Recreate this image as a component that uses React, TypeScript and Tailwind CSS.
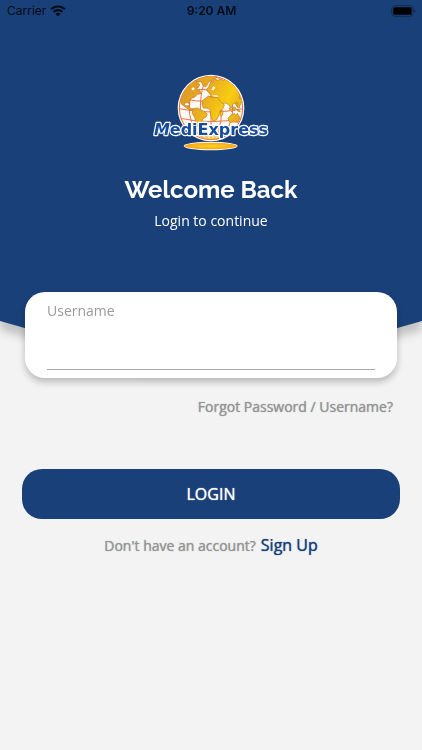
import React, { useState } from 'react';

const BODY_FONT = "font-['Open_Sans','Noto_Sans',sans-serif]";
const THICK = '[text-shadow:0_0_1px_currentColor]';

function StatusBar() {
  return (
    <div className="grid grid-cols-3 items-center h-[22px] pl-[7px] pr-[6px] font-[Inter,'Liberation_Sans',sans-serif] text-xs text-[#050b16]">
      <div className="flex items-center gap-1">
        <span>Carrier</span>
        <svg viewBox="0 0 46 34" className="w-4 h-3" fill="currentColor" aria-hidden="true">
          <path d="M23 1C14.500 1 6.700 4.300 1 9.700l4.300 4.500C9.900 9.900 16.100 7.200 23 7.200s13.100 2.700 17.700 7l4.300-4.500C39.300 4.300 31.500 1 23 1z" />
          <path d="M23 11.500c-5.600 0-10.700 2.200-14.500 5.800l4.400 4.500c2.700-2.500 6.200-4.100 10.100-4.100s7.400 1.600 10.100 4.100l4.400-4.500c-3.800-3.600-8.900-5.800-14.500-5.800z" />
          <path d="M23 22c-2.800 0-5.300 1.100-7.200 2.800L23 32.500l7.200-7.700C28.300 23.100 25.800 22 23 22z" />
        </svg>
      </div>
      <div className="text-center font-semibold">9:20 AM</div>
      <svg viewBox="0 0 25 12" className="w-[25px] h-3 justify-self-end" aria-hidden="true">
        <rect x="0.700" y="0.700" width="21.500" height="10.600" rx="3.200" fill="none" stroke="#12294d" strokeWidth="1" />
        <rect x="2.200" y="2.200" width="18.500" height="7.600" rx="1.900" fill="#000" />
        <path d="M23.400 4.200v3.600c.9-.3 1.300-1 1.300-1.800s-.4-1.500-1.300-1.800z" fill="#12294d" />
      </svg>
    </div>
  );
}

function Logo() {
  return (
    <svg viewBox="0 0 390 270" className="w-[130px] h-[90px]" role="img" aria-label="MediExpress">
      <defs>
        <linearGradient id="land" gradientUnits="userSpaceOnUse" x1="100" y1="60" x2="290" y2="150">
          <stop offset="0" stopColor="#dc9527" />
          <stop offset="0.400" stopColor="#e9ae20" />
          <stop offset="0.700" stopColor="#f8cd10" />
          <stop offset="1" stopColor="#e2a228" />
        </linearGradient>
        <radialGradient id="base">
          <stop offset="0" stopColor="#ffd21f" />
          <stop offset="1" stopColor="#f5a51c" />
        </radialGradient>
        <clipPath id="globe">
          <circle cx="195" cy="120" r="95" />
        </clipPath>
      </defs>
      <circle cx="195" cy="120" r="100" fill="#fff" />
      <circle cx="195" cy="120" r="95" fill="#fffaf4" stroke="#ee6a35" strokeWidth="3" />
      <g clipPath="url(#globe)">
        <g fill="none" stroke="#f0714a" strokeWidth="3">
          <path d="M195 20v200" />
          <ellipse cx="195" cy="120" rx="32" ry="96" />
          <ellipse cx="195" cy="120" rx="65" ry="96" />
          <path d="M122 58q73 16 146 0" />
          <path d="M104 91q91 20 182 0" />
          <path d="M99 122q96 20 192 0" />
          <path d="M104 151q91 20 182 0" />
        </g>
        <g fill="url(#land)" stroke="#bb7b22" strokeWidth="2" strokeLinejoin="round">
          <path d="M103 83l8-21 15-16 19-10 12 1-5 7 9 5-3 9-8 1 6 8 5-2 4 12-12 2-6 8-10 4-7 9 1 8-6-4-9 1-1 6 8 3 5-2 2 7 9 4 5 2-3 3-13-4-10-7-11-8-5-12z" />
          <path d="M148 39l9-9 22-9 20 1 14 5-13 8-10 5-10 16-8-2-6-12-9-1z" />
          <path d="M140 122l14-2 9 5 11 5 10 8-4 9-9 5-4 10-8 6-4 8-7-10-1-16-8-13 1-8z" />
          <path d="M181 66l7-10 6-13 11-9 11 3 8-4 8 4 9-5 8 3 5-6 9 2 14 7 15 22 12 34-3 10-10-5-7 7-4 14-6-2-6-13-6 2-7 14-7-11-8-5-8 1-5 8-8-2-4-9-10 3-9-5-8 2-7-2 6-13 11-2-5-6z" />
          <path d="M169 98l18-14 13 5 14-1 9 13 12 9-3 10-10 9-3 13-8 14-10 3-7-15-1-16-7-7-14-1-4-12z" />
          <path d="M224 132l6-4 1 8-4 9-5-3z" />
          <path d="M246 151l10-11 10-3 3 5 5-6 8 13-6 14-12-1-13 1z" />
          <path d="M251 119l10 10-3 3-9-9zM262 117l7 2-2 9-6-4zM272 123l9 5 2 4-8-3zM270 102l6 4-2 8-5-5zM279 87l4-9 3 10-4 6z" />
          <path d="M153 209q42-13 84 0l-9 9h-66z" opacity="0.500" />
        </g>
        <path d="M136 62l6-5 4 6-5 5zM196 66l6-11 6 3-5 9zM195 83l14-2 9 4-6 2z" fill="#fff8e8" />
      </g>
      <ellipse cx="194" cy="234" rx="81" ry="13" fill="#fff" />
      <ellipse cx="194" cy="234" rx="79" ry="10" fill="url(#base)" />
      <g
        className="font-['DejaVu_Sans',sans-serif] font-bold"
        fill="#164d9f"
        stroke="#fff"
        strokeWidth="7"
        strokeLinejoin="round"
        paintOrder="stroke"
      >
        <text x="195" y="201" fontSize="48" textAnchor="middle">
          <tspan fontStyle="italic">M</tspan>ediExpress
        </text>
      </g>
    </svg>
  );
}

export default function App() {
  const [username, setUsername] = useState('');

  return (
    <div className={`min-h-screen bg-[#f3f3f3] ${BODY_FONT}`}>
      <div className="drop-shadow-[0_9px_4px_rgba(0,0,0,0.2)]">
        <header className="bg-[#1a4079] pb-[130px] [clip-path:polygon(0_0,100%_0,100%_calc(100%-42px),65%_100%,35%_100%,0_calc(100%-42px))]">
          <StatusBar />
          <div className="flex flex-col items-center pt-[46px] text-white">
            <Logo />
            <h1 className="mt-4 font-[Raleway,Lato,sans-serif] text-2xl leading-8 font-bold">Welcome Back</h1>
            <p className="mt-[3px] text-sm leading-6">Login to continue</p>
          </div>
        </header>
      </div>

      <form onSubmit={(e) => e.preventDefault()}>
        <div className="relative -mt-[71px] mx-[25px] px-[22px] pt-[7px] pb-2 bg-white rounded-[20px] shadow-[0_4px_7px_rgba(0,0,0,0.24)]">
          <label htmlFor="username" className="block text-sm leading-6 text-[#999]">Username</label>
          <input
            id="username"
            type="text"
            value={username}
            onChange={(e) => setUsername(e.target.value)}
            className="block w-full h-[47px] border-b border-[#a8a8a8] bg-transparent text-base text-gray-800 outline-none"
          />
        </div>

        <div className="mt-4 px-[29px] text-right">
          <a href="#forgot" className={`text-sm leading-6 text-[#949494] ${THICK}`}>Forgot Password / Username?</a>
        </div>

        <div className="mt-[50px] px-[22px]">
          <button type="submit" className={`block w-full h-[50px] rounded-[20px] bg-[#1a4079] text-base text-white ${THICK}`}>
            LOGIN
          </button>
        </div>
      </form>

      <div className="flex items-baseline justify-center gap-[5px] mt-[14px]">
        <span className={`text-sm leading-6 text-[#949494] ${THICK}`}>Don't have an account?</span>
        <a href="#signup" className={`text-base leading-6 text-[#1a4079] ${THICK}`}>Sign Up</a>
      </div>
    </div>
  );
}
